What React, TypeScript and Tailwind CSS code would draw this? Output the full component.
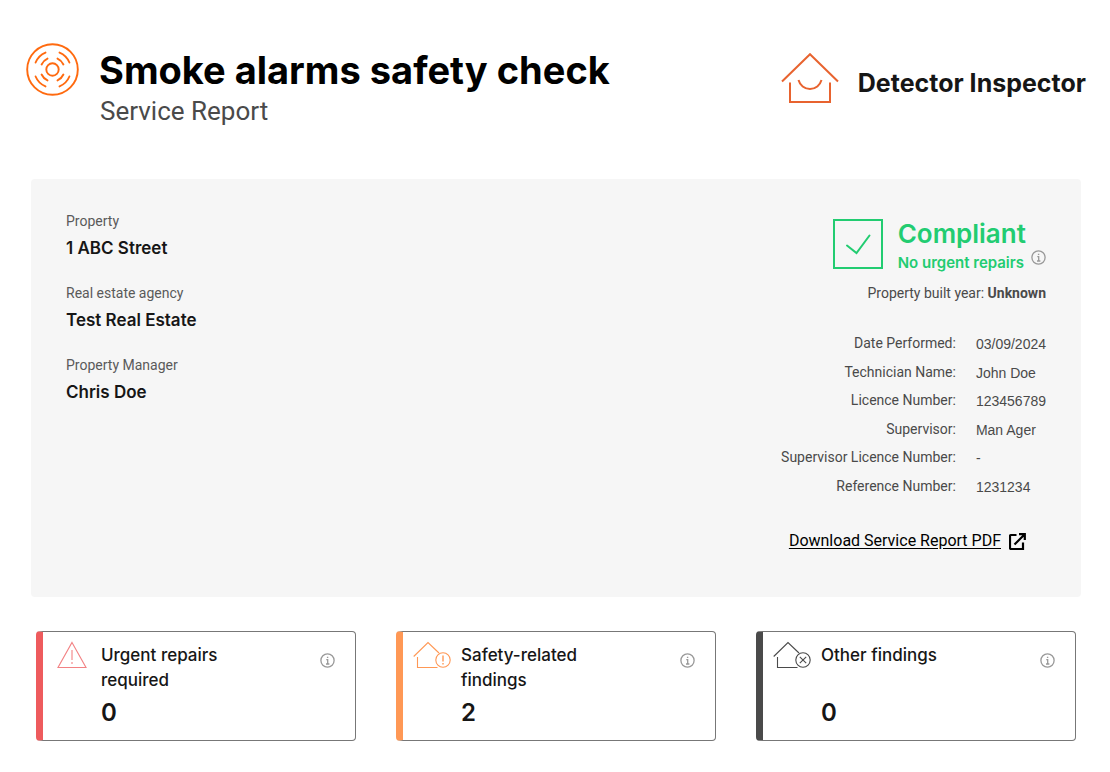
import React from 'react';

const details = [
  { label: 'Date Performed:', value: '03/09/2024' },
  { label: 'Technician Name:', value: 'John Doe' },
  { label: 'Licence Number:', value: '123456789' },
  { label: 'Supervisor:', value: 'Man Ager' },
  { label: 'Supervisor Licence Number:', value: '-' },
  { label: 'Reference Number:', value: '1231234' },
];

const property = [
  { label: 'Property', value: '1 ABC Street' },
  { label: 'Real estate agency', value: 'Test Real Estate' },
  { label: 'Property Manager', value: 'Chris Doe' },
];

const AlarmIcon = () => (
  <svg className="w-[53px] h-[53px] shrink-0" viewBox="0 0 53 53" fill="none" stroke="#ff6a0f" strokeWidth="1.9" strokeLinecap="round">
    <circle cx="26.5" cy="26.5" r="25.3" />
    <circle cx="26.5" cy="26.5" r="6.2" />
    {[0, 90, 180, 270].map((angle) => (
      <g key={angle} transform={`rotate(${angle} 26.5 26.5)`}>
        <path d="M33.5 9.6A18.3 18.3 0 0 1 43.4 19.5" />
        <path d="M31.5 15.6A12 12 0 0 1 37.4 21.5" />
      </g>
    ))}
  </svg>
);

const LogoIcon = () => (
  <svg className="w-[58px] h-[52px] shrink-0" viewBox="0 0 58 52" fill="none" stroke="#e8632f" strokeWidth="2">
    <path d="M1 28.5 29 1.2 57 28.5" />
    <path d="M9 29.5V49h40V29.5" />
    <path d="M17.5 27c1.4 5.2 6 9 11.5 9s10.100-3.800 11.500-9" />
  </svg>
);

const WarningIcon = () => (
  <svg className="w-[30px] h-7" viewBox="0 0 30 28" fill="none" stroke="#f28284" strokeWidth="1.1">
    <path d="M15 1.5 29 26.5H1z" />
    <path d="M15 9v10M15 21v2" />
  </svg>
);

const HouseIcon = ({ color, children }: { color: string; children: React.ReactNode }) => (
  <svg className="w-[38px] h-7" viewBox="0 0 38 28" fill="none" stroke={color} strokeWidth="1.1">
    <path d="M.7 15.5 15 1.5 26 12" />
    <path d="M4.5 16v10.5h20" />
    <circle cx="30" cy="19" r="7.2" />
    {children}
  </svg>
);

const InfoButton = ({ label }: { label: string }) => (
  <button type="button" aria-label={label} className="shrink-0 w-[15px] h-[15px] cursor-pointer">
    <svg viewBox="0 0 15 15" className="w-[15px] h-[15px]" fill="none" stroke="#999999" strokeWidth="1.3">
      <circle cx="7.5" cy="7.5" r="6.6" />
      <path d="M7.7 11V6.6H6.3M6 11h3.4M6.9 4.3h1.4" />
    </svg>
  </button>
);

const findings = [
  {
    title: 'Urgent repairs required',
    count: 0,
    border: 'border-l-[#ee5b5d]',
    icon: <WarningIcon />,
  },
  {
    title: 'Safety-related findings',
    count: 2,
    border: 'border-l-[#ff9855]',
    icon: (
      <HouseIcon color="#ff9855">
        <path d="M30 14.5v6M30 22v1.5" strokeWidth="1.4" />
      </HouseIcon>
    ),
  },
  {
    title: 'Other findings',
    count: 0,
    border: 'border-l-[#4a4a4a]',
    icon: (
      <HouseIcon color="#4a4a4a">
        <path d="M26.8 15.8l6.4 6.4M33.2 15.8l-6.4 6.4" />
      </HouseIcon>
    ),
  },
];

export default function App() {
  return (
    <div className="bg-white font-['Roboto',sans-serif] text-[#161616]">
      <header className="flex items-start justify-between pl-[26px] pr-6 pt-[43px] h-[179px]">
        <div className="flex items-start gap-5">
          <AlarmIcon />
          <div className="pt-1">
            <h1 className="font-['Inter',sans-serif] font-bold text-[38px] leading-[46px] text-black">Smoke alarms safety check</h1>
            <p className="pt-[2px] pl-px text-[26px] leading-8 text-[#4a4a4a]">Service Report</p>
          </div>
        </div>
        <div className="flex items-center gap-[19px] pt-[10px]">
          <LogoIcon />
          <span className="pt-2 font-['Inter',sans-serif] font-bold text-[25px] leading-8">Detector Inspector</span>
        </div>
      </header>

      <main className="pl-[31px] pr-[29px]">
        <section className="flex justify-between items-start rounded-sm bg-[#f6f6f6] px-[35px] pt-8 pb-11">
          <dl className="flex flex-col gap-[23px]">
            {property.map((item) => (
              <div key={item.label}>
                <dt className="text-sm text-[#5a5a5a]">{item.label}</dt>
                <dd className="pt-[5px] font-['Inter',sans-serif] font-semibold text-[17px] leading-6">{item.value}</dd>
              </div>
            ))}
          </dl>

          <div className="flex flex-col items-end">
            <div className="flex gap-[15px] pt-2 text-[#22cc71]">
              <svg className="w-[50px] h-[50px]" viewBox="0 0 50 50" fill="none" stroke="currentColor" strokeWidth="2">
                <rect x="1" y="1" width="48" height="48" />
                <path d="M14 26.5l9.5 7.5L36.5 16.5" strokeLinecap="round" />
              </svg>
              <div className="font-['Inter',sans-serif] font-semibold">
                <h2 className="text-[26px] leading-[30px]">Compliant</h2>
                <p className="flex gap-[7px] pt-px text-[15px] leading-[26px]">
                  No urgent repairs
                  <InfoButton label="About compliance" />
                </p>
              </div>
            </div>
            <p className="pt-[7px] text-sm text-[#4a4a4a]">
              Property built year: <strong className="font-bold">Unknown</strong>
            </p>

            <table className="mt-[27px] h-[171px] text-sm text-[#4a4a4a]">
              <tbody>
                {details.map((row) => (
                  <tr key={row.label}>
                    <th scope="row" className="p-0 pb-[2px] pr-5 text-right font-normal">{row.label}</th>
                    <td className="p-0 font-['Liberation_Sans',sans-serif]">{row.value}</td>
                  </tr>
                ))}
              </tbody>
            </table>

            <a href="#pdf" className="flex items-center gap-2 mt-7 mr-5 text-base text-black">
              <span className="underline underline-offset-2">Download Service Report PDF</span>
              <svg className="w-[17px] h-[17px]" viewBox="0 0 17 17" fill="none" stroke="currentColor" strokeWidth="2.2">
                <path d="M7.5 2H2a1 1 0 0 0-1 1v12a1 1 0 0 0 1 1h12V9.5M10 1.2h5.8v5.8M15.5 1.5 5.5 11.5" />
              </svg>
            </a>
          </div>
        </section>

        <section className="grid grid-cols-3 gap-10 px-[5px] pt-[34px]">
          {findings.map((item) => (
            <article key={item.title} className={`flex h-[110px] rounded border border-l-[7px] border-[#777777] ${item.border} pt-[9px] pr-5`}>
              <div className="w-[58px] shrink-0 flex justify-center">{item.icon}</div>
              <div className="flex-1 flex flex-col pt-[2px] font-['Inter',sans-serif]">
                <h3 className="w-[140px] h-[50px] font-medium text-[17px] leading-[25px]">{item.title}</h3>
                <span className="pt-1 font-semibold text-2xl">{item.count}</span>
              </div>
              <div className="pt-[10px]">
                <InfoButton label={`About ${item.title}`} />
              </div>
            </article>
          ))}
        </section>
      </main>
    </div>
  );
}
